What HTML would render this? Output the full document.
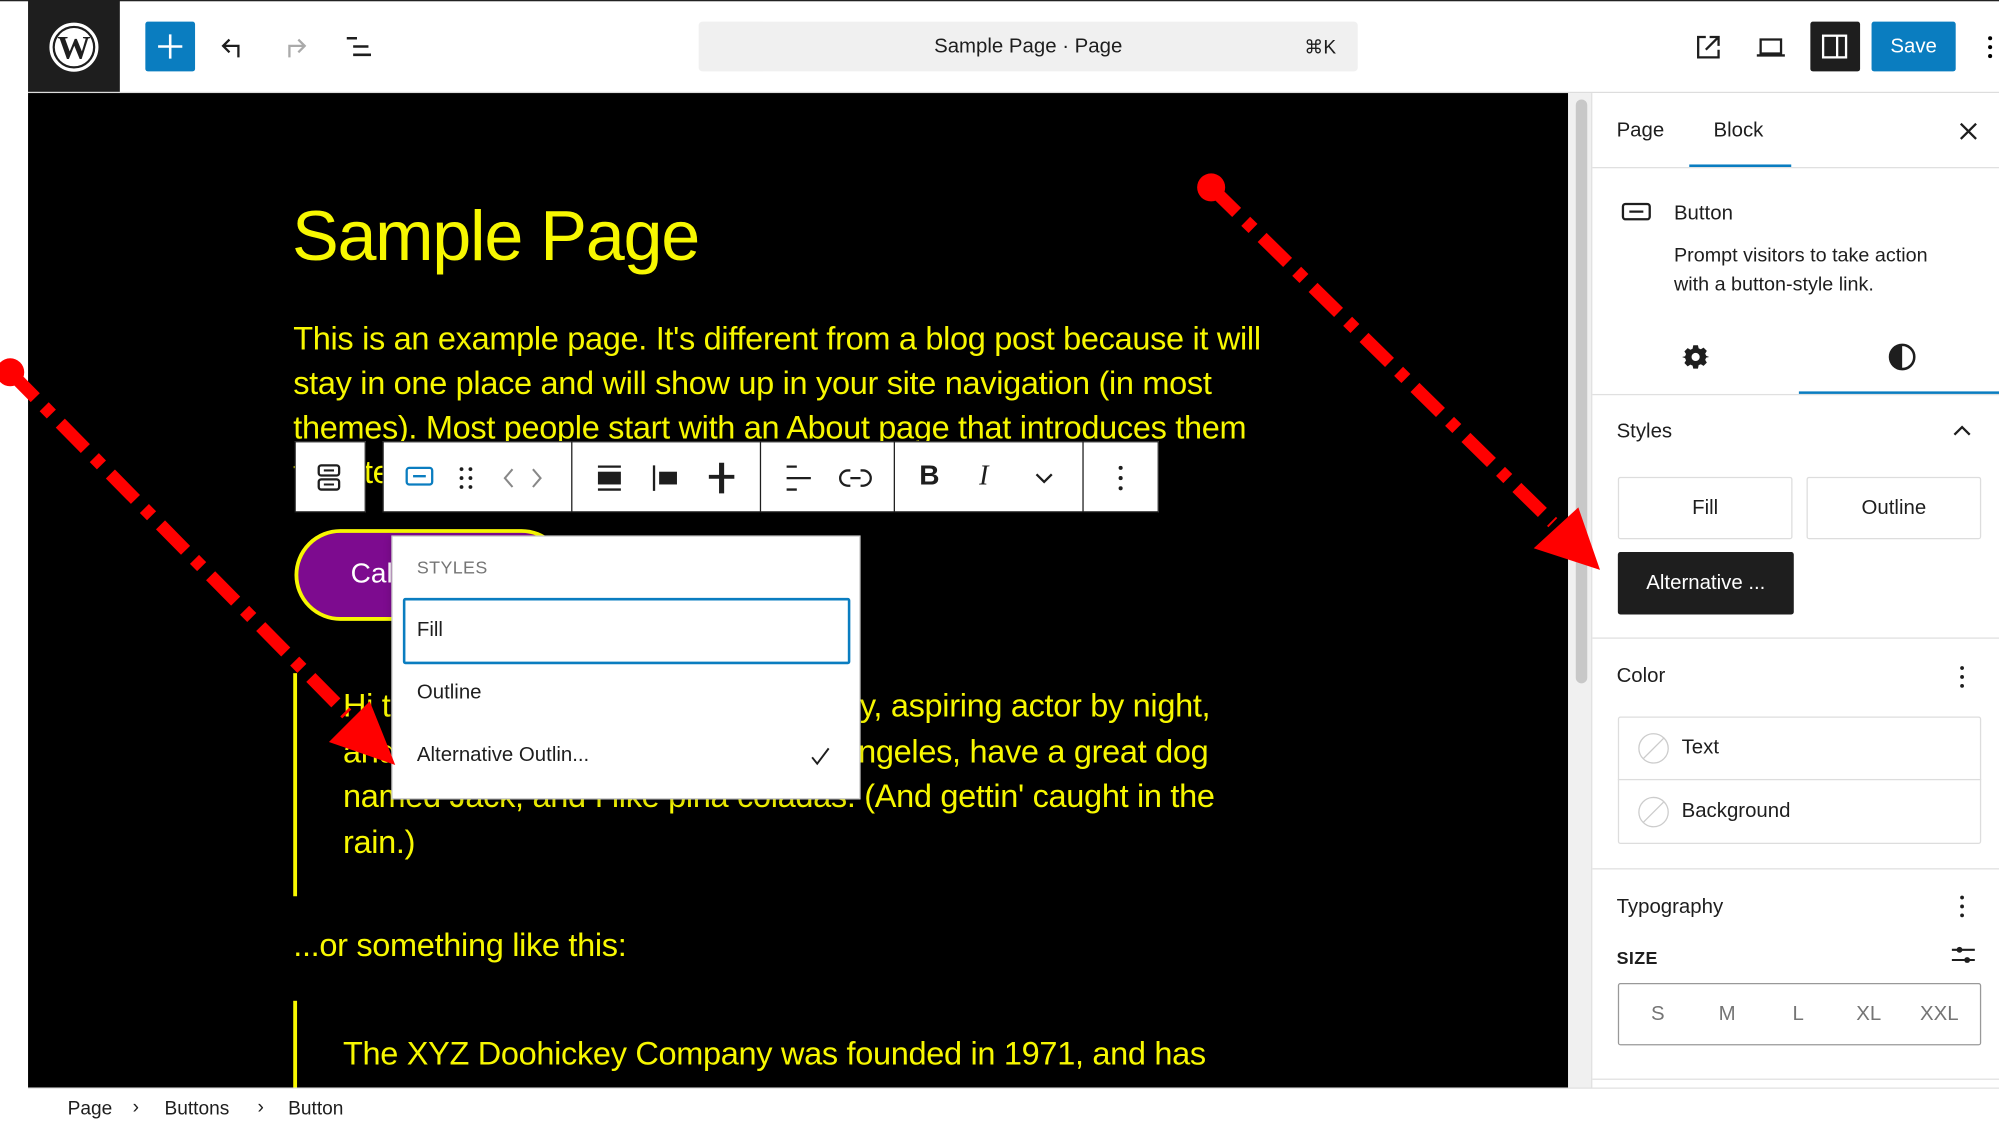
<!DOCTYPE html>
<html><head><meta charset="utf-8">
<style>
*{margin:0;padding:0;box-sizing:border-box}
html,body{width:1999px;height:1128px;overflow:hidden;background:#fff;font-family:"Liberation Sans",sans-serif}
#w{position:absolute;left:0;top:0;width:1568px;height:885px;transform:scale(1.2749);transform-origin:0 0;background:#fff}
.a{position:absolute}
.y{color:#f7f700}
.t{font-size:25.5px;white-space:nowrap;letter-spacing:-0.25px}
.sb{font-size:16px;color:#1e1e1e}
.ic{position:absolute}
</style></head><body><div id="w">
<!-- top bar -->
<div class="a" style="left:0;top:0;width:1568px;height:1px;background:#222"></div>
<div class="a" style="left:22px;top:0;width:72px;height:73px;background:#1e1e1e"></div>
<svg class="ic" style="left:38px;top:17px" width="40" height="40" viewBox="0 0 40 40"><circle cx="20" cy="20" r="18" fill="none" stroke="#fff" stroke-width="2.5"/><circle cx="20" cy="20" r="15" fill="#fff"/><text x="20" y="29" font-family="Liberation Serif" font-size="26" font-weight="bold" fill="#1e1e1e" text-anchor="middle">W</text></svg>
<div class="a" style="left:114px;top:17px;width:39px;height:39px;background:#0a7dc0;border-radius:2px"></div>
<svg class="ic" style="left:114px;top:17px" width="39" height="39"><path d="M19.5 10v19M10 19.5h19" stroke="#fff" stroke-width="2"/></svg>
<svg class="ic" style="left:172px;top:26px" width="22" height="22"><path d="M15 19V10H4M8 5L3 10l5 5" fill="none" stroke="#1e1e1e" stroke-width="1.8"/></svg>
<svg class="ic" style="left:220px;top:26px" width="22" height="22"><path d="M7 19V10h11M14 5l5 5-5 5" fill="none" stroke="#aaa" stroke-width="1.8"/></svg>
<svg class="ic" style="left:270px;top:26px" width="24" height="22"><path d="M2 4h8M7 10.5h12M7 17h14" stroke="#1e1e1e" stroke-width="2"/></svg>
<div class="a" style="left:548px;top:17px;width:517px;height:39px;background:#f0f0f0;border-radius:3px"></div>
<div class="a" style="left:548px;top:28px;width:517px;text-align:center;font-size:16px;color:#1e1e1e">Sample Page · Page</div>
<div class="a" style="left:1023px;top:28px;font-size:15px;color:#1e1e1e">⌘K</div>
<svg class="ic" style="left:1329px;top:26px" width="22" height="22"><path d="M9 3H3v16h16v-6M12 3h7v7M19 3L9 13" fill="none" stroke="#1e1e1e" stroke-width="1.8"/></svg>
<svg class="ic" style="left:1377px;top:26px" width="24" height="22"><path d="M4 5h16v11H4zM1 17.5h22" fill="none" stroke="#1e1e1e" stroke-width="1.8"/></svg>
<div class="a" style="left:1420px;top:17px;width:39px;height:39px;background:#1e1e1e;border-radius:2px"></div>
<svg class="ic" style="left:1428px;top:26px" width="22" height="22"><rect x="2" y="2" width="18" height="17" fill="none" stroke="#fff" stroke-width="1.8"/><path d="M13 2v17" stroke="#fff" stroke-width="1.8"/></svg>
<div class="a" style="left:1468px;top:17px;width:66px;height:39px;background:#0a7dc0;border-radius:2px;color:#fff;font-size:16px;text-align:center;line-height:39px">Save</div>
<svg class="ic" style="left:1556px;top:26px" width="10" height="22"><circle cx="5" cy="4" r="1.6"/><circle cx="5" cy="11" r="1.6"/><circle cx="5" cy="18" r="1.6"/></svg>
<div class="a" style="left:22px;top:72px;width:1546px;height:1px;background:#ddd"></div>

<!-- canvas -->
<div class="a" style="left:22px;top:73px;width:1208px;height:780px;background:#000;overflow:hidden">
 <div class="a y" style="left:207px;top:80px;font-size:55px;letter-spacing:-1px;white-space:nowrap">Sample Page</div>
 <div class="a y t" style="left:208px;top:176px;line-height:35px">This is an example page. It's different from a blog post because it will<br>stay in one place and will show up in your site navigation (in most<br>themes). Most people start with an About page that introduces them<br>to potential site visitors.</div>
 <div class="a" style="left:209px;top:342px;width:214px;height:72px;border:3px solid #f7f700;border-radius:36px;background:#7d0b8f"></div>
 <div class="a" style="left:253px;top:364px;color:#fff;font-size:22px">Call to action</div>
 <div class="a" style="left:208px;top:455px;width:3px;height:175px;background:#f7f700"></div>
 <div class="a y t" style="left:247px;top:464px;line-height:35.5px">Hi there! I'm a bike messenger by day, aspiring actor by night,<br>and this is my website. I live in Los Angeles, have a great dog<br>named Jack, and I like piña coladas. (And gettin' caught in the<br>rain.)</div>
 <div class="a y t" style="left:208px;top:655px">...or something like this:</div>
 <div class="a" style="left:208px;top:712px;width:3px;height:80px;background:#f7f700"></div>
 <div class="a y t" style="left:247px;top:740px">The XYZ Doohickey Company was founded in 1971, and has</div>
</div>

<!-- block toolbar -->
<div class="a" style="left:231px;top:346px;width:56px;height:56px;background:#fff;border:1px solid #1e1e1e"></div>
<svg class="ic" style="left:248px;top:363px" width="22" height="24"><rect x="2" y="2" width="16" height="8" rx="2" fill="none" stroke="#1e1e1e" stroke-width="1.8"/><rect x="2" y="13" width="16" height="8" rx="2" fill="none" stroke="#1e1e1e" stroke-width="1.8"/><path d="M6 6h8M6 17h8" stroke="#1e1e1e" stroke-width="1.6"/></svg>
<div class="a" style="left:300px;top:346px;width:609px;height:56px;background:#fff;border:1px solid #1e1e1e"></div>
<div class="a" style="left:448px;top:346px;width:1px;height:56px;background:#1e1e1e"></div>
<div class="a" style="left:596px;top:346px;width:1px;height:56px;background:#1e1e1e"></div>
<div class="a" style="left:701px;top:346px;width:1px;height:56px;background:#1e1e1e"></div>
<div class="a" style="left:849px;top:346px;width:1px;height:56px;background:#1e1e1e"></div>
<svg class="ic" style="left:317px;top:364px" width="24" height="20"><rect x="2" y="3" width="20" height="13" rx="2" fill="none" stroke="#0a7dc0" stroke-width="1.8"/><path d="M7 9.5h10" stroke="#0a7dc0" stroke-width="1.8"/></svg>
<svg class="ic" style="left:358px;top:364px" width="16" height="22" fill="#1e1e1e"><circle cx="4" cy="4" r="1.5"/><circle cx="11" cy="4" r="1.5"/><circle cx="4" cy="11" r="1.5"/><circle cx="11" cy="11" r="1.5"/><circle cx="4" cy="18" r="1.5"/><circle cx="11" cy="18" r="1.5"/></svg>
<svg class="ic" style="left:393px;top:364px" width="34" height="22"><path d="M9 4L3 11l6 7M25 4l6 7-6 7" fill="none" stroke="#888" stroke-width="1.6"/></svg>
<svg class="ic" style="left:466px;top:363px" width="24" height="24"><path d="M3 3h18M3 21h18" stroke="#1e1e1e" stroke-width="1.8"/><rect x="3" y="7" width="18" height="10" fill="#1e1e1e"/></svg>
<svg class="ic" style="left:510px;top:363px" width="24" height="24"><path d="M3 2v20" stroke="#1e1e1e" stroke-width="1.8"/><rect x="7" y="7" width="14" height="10" fill="#1e1e1e"/></svg>
<svg class="ic" style="left:554px;top:362px" width="24" height="26"><path d="M12 1v24" stroke="#1e1e1e" stroke-width="4"/><path d="M2 12h20" stroke="#1e1e1e" stroke-width="3"/></svg>
<svg class="ic" style="left:614px;top:363px" width="24" height="24"><path d="M3 3h8M3 12h19M3 21h8" stroke="#1e1e1e" stroke-width="1.8"/></svg>
<svg class="ic" style="left:658px;top:363px" width="26" height="24"><path d="M9 6H7a6 6 0 000 12h2M17 6h2a6 6 0 010 12h-2M9 12h8" fill="none" stroke="#1e1e1e" stroke-width="1.8"/></svg>
<div class="a" style="left:721px;top:360px;font-size:22px;font-weight:bold;color:#1e1e1e">B</div>
<div class="a" style="left:768px;top:360px;font-size:22px;font-style:italic;color:#1e1e1e;font-family:'Liberation Serif'">I</div>
<svg class="ic" style="left:810px;top:368px" width="18" height="14"><path d="M3 4l6 6 6-6" fill="none" stroke="#1e1e1e" stroke-width="1.8"/></svg>
<svg class="ic" style="left:874px;top:363px" width="10" height="24" fill="#1e1e1e"><circle cx="5" cy="4" r="1.6"/><circle cx="5" cy="12" r="1.6"/><circle cx="5" cy="20" r="1.6"/></svg>

<!-- styles dropdown -->
<div class="a" style="left:307px;top:420px;width:368px;height:207px;background:#fff;border:1px solid #ccc;box-shadow:0 2px 6px rgba(0,0,0,.2)"></div>
<div class="a" style="left:327px;top:437px;font-size:14px;color:#757575;letter-spacing:.3px">STYLES</div>
<div class="a" style="left:316px;top:469px;width:351px;height:52px;border:2px solid #0a7dc0;border-radius:2px"></div>
<div class="a" style="left:327px;top:486px;font-size:16px;color:#1e1e1e">Fill</div>
<div class="a" style="left:327px;top:535px;font-size:16px;color:#1e1e1e">Outline</div>
<div class="a" style="left:327px;top:584px;font-size:16px;color:#1e1e1e">Alternative Outlin...</div>
<svg class="ic" style="left:634px;top:584px" width="20" height="20"><path d="M3 10l4 5 9-12" fill="none" stroke="#1e1e1e" stroke-width="1.5"/></svg>

<!-- scrollbar -->
<div class="a" style="left:1230px;top:73px;width:18px;height:780px;background:#f0f0f0"></div>
<div class="a" style="left:1236px;top:78px;width:9px;height:458px;background:#c8c8c8;border-radius:5px"></div>

<!-- sidebar -->
<div class="a" style="left:1248px;top:73px;width:320px;height:780px;background:#fff;border-left:1px solid #e0e0e0"></div>
<div class="a sb" style="left:1268px;top:94px;font-size:16px">Page</div>
<div class="a sb" style="left:1344px;top:94px;font-size:16px">Block</div>
<div class="a" style="left:1325px;top:129px;width:80px;height:2px;background:#0a7dc0"></div>
<div class="a" style="left:1249px;top:131px;width:319px;height:1px;background:#e0e0e0"></div>
<svg class="ic" style="left:1536px;top:95px" width="16" height="16"><path d="M2 2l12 12M14 2L2 14" stroke="#1e1e1e" stroke-width="1.8"/></svg>
<svg class="ic" style="left:1271px;top:158px" width="26" height="18"><rect x="2" y="2" width="21" height="12" rx="2" fill="none" stroke="#1e1e1e" stroke-width="1.8"/><path d="M7 8h11" stroke="#1e1e1e" stroke-width="1.8"/></svg>
<div class="a sb" style="left:1313px;top:159px;font-size:16px">Button</div>
<div class="a sb" style="left:1313px;top:189px;font-size:15.5px;line-height:23px">Prompt visitors to take action<br>with a button-style link.</div>
<svg class="ic" style="left:1319px;top:269px" width="22" height="22" viewBox="0 0 24 24"><path fill="#1e1e1e" d="M10 2h4l.6 2.6 1.9.8 2.3-1.4 2.8 2.8-1.4 2.3.8 1.9L23.6 12v0l-2.6.6-.8 1.9 1.4 2.3-2.8 2.8-2.3-1.4-1.9.8L14 22h-4l-.6-2.6-1.9-.8-2.3 1.4-2.8-2.8 1.4-2.3-.8-1.9L.4 12l2.6-.6.8-1.9L2.4 7.2l2.8-2.8 2.3 1.4 1.9-.8z"/><circle cx="12" cy="12" r="3.5" fill="#fff"/></svg>
<svg class="ic" style="left:1481px;top:269px" width="22" height="22"><circle cx="11" cy="11" r="9.5" fill="none" stroke="#1e1e1e" stroke-width="2"/><path d="M11 1.5a9.5 9.5 0 000 19z" fill="#1e1e1e"/></svg>
<div class="a" style="left:1411px;top:307px;width:157px;height:2px;background:#0a7dc0"></div>
<div class="a" style="left:1249px;top:309px;width:319px;height:1px;background:#e0e0e0"></div>
<div class="a sb" style="left:1268px;top:330px;font-size:16px">Styles</div>
<svg class="ic" style="left:1531px;top:332px" width="16" height="12"><path d="M2 9l6-6 6 6" fill="none" stroke="#1e1e1e" stroke-width="1.8"/></svg>
<div class="a sb" style="left:1269px;top:374px;width:137px;height:49px;border:1px solid #ddd;border-radius:2px;text-align:center;line-height:47px">Fill</div>
<div class="a sb" style="left:1417px;top:374px;width:137px;height:49px;border:1px solid #ddd;border-radius:2px;text-align:center;line-height:47px">Outline</div>
<div class="a" style="left:1269px;top:433px;width:138px;height:49px;background:#1e1e1e;border-radius:2px;color:#fff;font-size:16px;text-align:center;line-height:49px">Alternative ...</div>
<div class="a" style="left:1249px;top:500px;width:319px;height:1px;background:#e0e0e0"></div>
<div class="a sb" style="left:1268px;top:522px">Color</div>
<svg class="ic" style="left:1534px;top:521px" width="10" height="22" fill="#1e1e1e"><circle cx="5" cy="3" r="1.5"/><circle cx="5" cy="10" r="1.5"/><circle cx="5" cy="17" r="1.5"/></svg>
<div class="a" style="left:1269px;top:562px;width:285px;height:100px;border:1px solid #ddd;border-radius:2px"></div>
<div class="a" style="left:1269px;top:611px;width:285px;height:1px;background:#ddd"></div>
<svg class="ic" style="left:1284px;top:574px" width="26" height="26"><circle cx="13" cy="13" r="11.5" fill="none" stroke="#ccc" stroke-width="1"/><path d="M5 21L21 5" stroke="#ccc"/></svg>
<svg class="ic" style="left:1284px;top:624px" width="26" height="26"><circle cx="13" cy="13" r="11.5" fill="none" stroke="#ccc" stroke-width="1"/><path d="M5 21L21 5" stroke="#ccc"/></svg>
<div class="a sb" style="left:1319px;top:578px">Text</div>
<div class="a sb" style="left:1319px;top:628px">Background</div>
<div class="a" style="left:1249px;top:681px;width:319px;height:1px;background:#e0e0e0"></div>
<div class="a sb" style="left:1268px;top:703px">Typography</div>
<svg class="ic" style="left:1534px;top:701px" width="10" height="22" fill="#1e1e1e"><circle cx="5" cy="3" r="1.5"/><circle cx="5" cy="10" r="1.5"/><circle cx="5" cy="17" r="1.5"/></svg>
<div class="a sb" style="left:1268px;top:743px;font-size:14px;font-weight:bold;letter-spacing:.3px">SIZE</div>
<svg class="ic" style="left:1529px;top:739px" width="22" height="20"><path d="M2 6h18M2 14h18" stroke="#1e1e1e" stroke-width="1.6"/><circle cx="8" cy="6" r="2.3" fill="#1e1e1e"/><circle cx="14" cy="14" r="2.3" fill="#1e1e1e"/></svg>
<div class="a" style="left:1269px;top:771px;width:285px;height:49px;border:1px solid #999;border-radius:2px"></div>
<div class="a" style="left:1295px;top:787px;font-size:16px;color:#757575">S</div>
<div class="a" style="left:1348px;top:787px;font-size:16px;color:#757575">M</div>
<div class="a" style="left:1406px;top:787px;font-size:16px;color:#757575">L</div>
<div class="a" style="left:1456px;top:787px;font-size:16px;color:#757575">XL</div>
<div class="a" style="left:1506px;top:787px;font-size:16px;color:#757575">XXL</div>
<div class="a" style="left:1249px;top:846px;width:319px;height:1px;background:#e0e0e0"></div>

<!-- breadcrumb -->
<div class="a" style="left:22px;top:853px;width:1546px;height:1px;background:#e0e0e0"></div>
<div class="a sb" style="left:53px;top:861px;font-size:15px">Page</div>
<div class="a sb" style="left:104px;top:860px;font-size:15px">›</div>
<div class="a sb" style="left:129px;top:861px;font-size:15px">Buttons</div>
<div class="a sb" style="left:202px;top:860px;font-size:15px">›</div>
<div class="a sb" style="left:226px;top:861px;font-size:15px">Button</div>

<!-- arrows -->
<svg class="a" style="left:0;top:0" width="1568" height="885">
<g stroke="#f00" stroke-width="10" stroke-dasharray="28 10 8 10" fill="none">
<path d="M8 292L272 560"/>
<path d="M950 147L1218 410"/>
</g>
<circle cx="8" cy="292" r="11" fill="#f00"/>
<circle cx="950" cy="147" r="11" fill="#f00"/>
<path d="M310 600L258 582L290 550z" fill="#f00"/>
<path d="M1255 447L1203 430L1238 398z" fill="#f00"/>
</svg>
</div></body></html>
